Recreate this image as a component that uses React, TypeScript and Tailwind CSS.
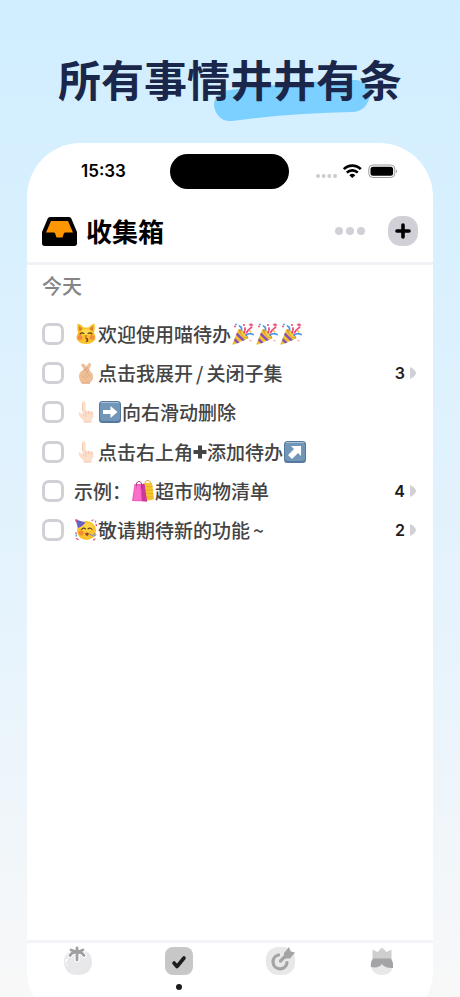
import React, { useState } from "react";

type SvgProps = React.SVGProps<SVGSVGElement>;

const emojiClass = "mx-px inline-block size-[22px] shrink-0";

const KissingCat = () => (
  <svg viewBox="0 0 44 44" className={emojiClass} role="img" aria-label="😽">
    <path d="M5 1c5 0 10 5 12 8h10c3-3 8-8 12-8 1 6 1 12-1 18l3 8c1 9-8 15-19 15S2 36 3 27l3-8C4 13 4 7 5 1z" fill="#fbc22e" />
    <path d="M8 6c3 1 5 3 7 6l-6 5c-1-4-2-7-1-11zM36 6c-3 1-5 3-7 6l6 5c1-4 2-7 1-11z" fill="#d98324" />
    <ellipse cx="22" cy="18" rx="9" ry="6" fill="#fee25a" opacity=".8" />
    <circle cx="10" cy="29" r="5" fill="#ef7a4a" opacity=".75" />
    <circle cx="34" cy="29" r="5" fill="#ef7a4a" opacity=".75" />
    <path d="M10 22q4-4 8-1M26 21q4-3 8 1M21 30q5 0 3 3 4 1-1 4" fill="none" stroke="#67351a" strokeWidth="2.2" strokeLinecap="round" />
    <path d="M19 25h6l-3 3z" fill="#b74d3b" />
  </svg>
);

const FingerHeart = () => (
  <svg viewBox="0 0 44 44" className={emojiClass} role="img" aria-label="🫰🏼">
    <path d="M14 43c-4-4-6-9-6-15 0-4 2-8 5-10l5-3-5-7c-2-4 2-7 5-4l5 5 3-5c2-4 7-2 6 2l-4 11c5 2 7 6 8 10 1 7-2 11-5 13l-1 3z" fill="#efbf98" />
    <path d="M18 15l3 2 3-6M24 19l4-2" fill="none" stroke="#c98e69" strokeWidth="1.500" strokeLinecap="round" />
    <path d="M23 21l7 7M19 24l7 7M15 28l6 6" fill="none" stroke="#d9a17b" strokeWidth="1.500" strokeLinecap="round" />
    <path d="M14 42h16" stroke="#dba17b" strokeWidth="2" />
  </svg>
);

const PointUp = () => (
  <svg viewBox="0 0 44 44" className={emojiClass} role="img" aria-label="👆🏻">
    <path d="M14 4c0-5 7-5 7 0v16l13 1c2 1 3 3 3 5 0 6-1 9-4 12v5H18l-2-5c-3-3-7-7-9-12-1-3 3-5 5-2l3 4z" fill="#fcdfca" />
    <path d="M22 20v6M27 20v6M32 21v5" fill="none" stroke="#e9c0a5" strokeWidth="1.300" strokeLinecap="round" />
    <path d="M15 28c4-2 7 1 7 4" fill="none" stroke="#e9c0a5" strokeWidth="1.300" />
    <path d="M18 42h15M15 5v15" fill="none" stroke="#edc4a9" strokeWidth="1.500" />
  </svg>
);

const ArrowTile = ({ diagonal }: { diagonal?: boolean }) => (
  <svg viewBox="0 0 44 44" className={emojiClass} role="img" aria-label={diagonal ? "↗️" : "➡️"}>
    <rect x="0" y="0" width="44" height="44" rx="7" fill="#55799c" />
    <rect x="2" y="2" width="40" height="38" rx="6" fill="#7196b7" />
    <path d="M5 3h34" stroke="#a8c3d9" strokeWidth="2" strokeLinecap="round" />
    {diagonal ? (
      <path d="M14 10h20v20l-6-6-12 12-8-8 12-12z" fill="#fff" />
    ) : (
      <path d="M8 18h15v-8l14 12-14 12v-8H8z" fill="#fff" />
    )}
  </svg>
);

const Party = () => (
  <svg viewBox="0 0 44 44" className={emojiClass} role="img" aria-label="🎉">
    <path d="M13 12 1 41c-1 2 1 3 3 2l28-12z" fill="#f5bd31" />
    <path d="M10 19l16 15-5 2L8 24zM6 30l9 9-5 2-6-6z" fill="#8054b9" />
    <path d="M14 12c6 1 18 12 19 19-6 2-22-13-19-19z" fill="#d39a29" />
    <path d="M17 15c6 3 10 8 13 14-6-1-12-7-13-14z" fill="#f9d45b" />
    <path d="M19 14c1-4 0-6-4-8M28 24c4-3 9-4 14-1" fill="none" stroke="#4a97ec" strokeWidth="3.500" strokeLinecap="round" />
    <path d="M24 19c2-3 3-5 2-9M29 19c2-1 2-4 4-5s3-5 6-5" fill="none" stroke="#ed4b77" strokeWidth="3.500" strokeLinecap="round" />
    <circle cx="6" cy="7" r="2" fill="#f0577c" />
    <circle cx="24" cy="4" r="2" fill="#e24e78" />
    <circle cx="37" cy="17" r="2" fill="#f1b72e" />
    <circle cx="8" cy="3" r="2" fill="#58a4ec" />
    <path d="M34 3l5-2 3 4-4 2zM35 35l4 1" fill="#f05f86" stroke="#f05f86" strokeWidth="1.500" />
  </svg>
);

const Bags = () => (
  <svg viewBox="0 0 44 44" className={emojiClass} role="img" aria-label="🛍️">
    <path d="M26 7c0-8 11-8 12 1v9" fill="none" stroke="#d6a128" strokeWidth="2" />
    <path d="M22 6h18l4 33-17 3z" fill="#f4c52e" />
    <path d="M25 13h17M26 20h17M26 27h17M27 34h16" stroke="#dfaa25" strokeWidth="1.500" />
    <path d="M5 8h20l5 35-30-1z" fill="#f45cbf" />
    <path d="M18 8h7l5 35-10-1z" fill="#c9389a" />
    <path d="M9 17V8c1-7 9-7 10 0v9" fill="none" stroke="#a7337d" strokeWidth="2" />
    <path d="M6 11h10l2 29H3z" fill="#ff7ad1" opacity=".6" />
  </svg>
);

const PartyFace = () => (
  <svg viewBox="0 0 44 44" className={emojiClass} role="img" aria-label="🥳">
    <circle cx="23" cy="23" r="19" fill="#fbc02d" />
    <ellipse cx="23" cy="16" rx="13" ry="9" fill="#fddc52" opacity=".7" />
    <path d="M1 1l20 6c-3 4-9 9-15 11z" fill="#7355bd" />
    <path d="M7 4l-2 9M14 6l-7 9" stroke="#4a7edc" strokeWidth="2" />
    <circle cx="3" cy="3" r="2.500" fill="#e54a76" />
    <circle cx="12" cy="28" r="5" fill="#ee7b35" opacity=".7" />
    <path d="M13 21q4-5 8-1M26 20q4-4 8 1" fill="none" stroke="#65401b" strokeWidth="2.200" strokeLinecap="round" />
    <path d="M21 28c4-1 6 0 7 2l-3 4c-4-1-5-3-4-6z" fill="#a34225" />
    <path d="M28 30l9 4c5 1 6-4 3-5-3 0-4 3-1 4" fill="none" stroke="#7f8fae" strokeWidth="2" strokeLinecap="round" />
    <path d="M34 3l2-1M42 11l1 2M2 27l0 3M3 39l3 2M37 42l3-2" stroke="#e74976" strokeWidth="2.500" strokeLinecap="round" />
    <path d="M41 4l0 2M2 34l1-1" stroke="#42a4dd" strokeWidth="2.500" strokeLinecap="round" />
  </svg>
);

const HeavyPlus = () => (
  <svg viewBox="0 0 28 44" className="inline-block h-[22px] w-[14px] shrink-0" role="img" aria-label="➕">
    <path d="M10 9h8v9h9v8h-9v9h-8v-9H1v-8h9z" fill="#444" />
  </svg>
);

const Tomato = (props: SvgProps) => (
  <svg viewBox="0 0 30 30" {...props}>
    <path d="M15 5c9-2 14 3 14 11 0 9-6 13-14 13S1 25 1 16C1 8 7 3 15 5z" fill="#e8e8ea" />
    <path d="M3 16q0-2 1-3M4 19l0 0" fill="none" stroke="#fff" strokeWidth="1.600" strokeLinecap="round" />
    <g fill="none" strokeLinecap="round" strokeLinejoin="round">
      <path d="M14 2v12M14 6l-6-2M14 6l6-2M14 6.500q-5-1-7 3M14 6.500q5-1 7 3" stroke="#fff" strokeWidth="5" />
      <path d="M14 2v12M14 6l-6-2M14 6l6-2M14 6.500q-5-1-7 3M14 6.500q5-1 7 3" stroke="#a0a0a4" strokeWidth="2.800" />
    </g>
  </svg>
);

const TaskCheck = (props: SvgProps) => (
  <svg viewBox="0 0 30 30" {...props}>
    <rect x="1" y="1" width="28" height="28" rx="8" fill="#c7c7c7" />
    <path d="M10 17l3 3.500 7-8.500" fill="none" stroke="#1d1d1f" strokeWidth="3.600" strokeLinecap="round" strokeLinejoin="round" />
  </svg>
);

const Target = (props: SvgProps) => (
  <svg viewBox="0 0 30 30" {...props}>
    <rect x="0" y="1" width="29" height="28" rx="12" fill="#e8e8e8" />
    <path d="M12.500 9a7 7 0 1 0 8.500 7.500" fill="none" stroke="#a4a4a7" strokeWidth="3.200" strokeLinecap="round" />
    <path d="M14.500 15l6-6" stroke="#a4a4a7" strokeWidth="3.200" strokeLinecap="round" />
    <path d="M18 7l5-6 1.500 4.500 4.500 1-5 6h-6z" fill="#a4a4a7" />
  </svg>
);

const King = (props: SvgProps) => (
  <svg viewBox="0 0 30 30" {...props}>
    <path d="M4 18c0 7 4 11 11 11s11-4 11-11z" fill="#e8e8e9" />
    <path d="M5.500 3.500l5 2.500L15 1.500 19.500 6l5-2.500V13h-19z" fill="#cfcfcf" strokeLinejoin="round" />
    <path d="M6 12.500h18c2 3 2.500 6 2 9.500-5 0-9-1-11-4-2 3-6 4-11 3-.500-3 0-6 2-8.500z" fill="#a4a4a7" />
  </svg>
);

const InboxIcon = () => (
  <svg viewBox="0 0 35 29" className="h-[29px] w-[35px]" aria-hidden="true">
    <path d="M8 0h19c1.500 0 2 1 2.500 2L35 15v11.500c0 1.500-1 2.500-2.500 2.500h-30C1 29 0 28 0 26.500V15L5.500 2C6 1 6.500 0 8 0z" fill="#000" />
    <path d="M9 4h17l5 11.500h-7.500c-1 0-1.500.500-2 2l-1 3h-6l-1-3c-.500-1.500-1-2-2-2H4z" fill="#ff9500" />
  </svg>
);

const StatusIcons = () => (
  <svg viewBox="0 0 84 16" className="h-4 w-[84px]" aria-hidden="true">
    <g fill="#cccccf">
      <circle cx="5" cy="12" r="2" />
      <circle cx="10.700" cy="12" r="2" />
      <circle cx="16.300" cy="12" r="2" />
      <circle cx="22" cy="12" r="2" />
    </g>
    <g fill="none" stroke="#000" strokeWidth="2.600">
      <path d="M30.800 5.200a12 12 0 0 1 17 0" />
      <path d="M33.800 8.600a7.800 7.800 0 0 1 11 0" />
    </g>
    <path d="M36.300 11.200a4.300 4.300 0 0 1 6 0l-3 2.800z" />
    <rect x="55.800" y="1" width="26" height="12.500" rx="4" fill="none" stroke="#9a9a9a" />
    <rect x="57.500" y="2.700" width="22.600" height="9" rx="2.500" />
    <path d="M83 5.200q2 2 0 4z" fill="#9a9a9a" />
  </svg>
);

const todos: { id: string; content: React.ReactNode; count?: number }[] = [
  { id: "welcome", content: <><KissingCat />欢迎使用喵待办<Party /><Party /><Party /></> },
  { id: "expand", content: <><FingerHeart />点击我展开<span className="px-[3px]">/</span>关闭子集</>, count: 3 },
  { id: "swipe", content: <><PointUp /><ArrowTile />向右滑动删除</> },
  { id: "add", content: <><PointUp />点击右上角<HeavyPlus />添加待办<ArrowTile diagonal /></> },
  { id: "shopping", content: <>示例：<Bags />超市购物清单</>, count: 4 },
  { id: "soon", content: <><PartyFace />敬请期待新的功能<span className="px-[3px]">~</span></>, count: 2 },
];

const tabs = [
  { name: "番茄", Icon: Tomato },
  { name: "待办", Icon: TaskCheck },
  { name: "目标", Icon: Target },
  { name: "我的", Icon: King },
];

const StatusBar = () => (
  <div className="grid h-[57px] grid-cols-3 items-center">
    <span className="pl-[54px] font-['Inter'] text-[17px] font-semibold">15:33</span>
    <div className="h-[35px] w-[119px] justify-self-center rounded-full bg-black" />
    <div className="justify-self-end pr-9">
      <StatusIcons />
    </div>
  </div>
);

const Header = () => (
  <header className="flex h-[65px] items-center border-b-3 border-[#f1f1f6] px-[15px]">
    <InboxIcon />
    <h2 className="ml-[9px] text-[26px] leading-8 font-bold">收集箱</h2>
    <button type="button" aria-label="更多" className="mr-[23px] ml-auto flex h-8 items-center gap-[3px]">
      <span className="size-2 rounded-full bg-[#d1d0d7]" />
      <span className="size-2 rounded-full bg-[#d1d0d7]" />
      <span className="size-2 rounded-full bg-[#d1d0d7]" />
    </button>
    <button type="button" aria-label="添加" className="flex size-[30px] items-center justify-center rounded-[13px] bg-[#d1d0d7]">
      <svg viewBox="0 0 16 16" className="size-4">
        <path d="M8 2v12M2 8h12" stroke="#000" strokeWidth="3.600" strokeLinecap="round" />
      </svg>
    </button>
  </header>
);

const TodoList = () => (
  <ul className="grid h-[236px] auto-rows-fr">
    {todos.map((todo) => (
      <li key={todo.id} className="flex items-center">
        <input
          id={todo.id}
          type="checkbox"
          className="size-[22px] shrink-0 appearance-none rounded-[7px] border-3 border-[#d1d0d7] checked:bg-[#d1d0d7]"
        />
        <label htmlFor={todo.id} className="ml-[10px] flex items-center text-[19px] leading-6 font-medium whitespace-nowrap text-[#444]">
          {todo.content}
        </label>
        {todo.count && (
          <button type="button" className="ml-auto flex items-center gap-1 font-['Inter'] text-[16px] leading-6 font-semibold text-[#1c1c1e]">
            {todo.count}
            <svg viewBox="0 0 8 12" className="h-3 w-2" aria-hidden="true">
              <path d="M1 1q0-1 1-.500C5 2 7 4.500 7 6s-2 4-5 5.500q-1 .500-1-.500z" fill="#d1d0d7" />
            </svg>
          </button>
        )}
      </li>
    ))}
  </ul>
);

const TabBar = () => {
  const [active, setActive] = useState("待办");

  return (
    <nav className="grid h-[85px] shrink-0 grid-cols-4 border-t-3 border-[#f3f3f8]">
      {tabs.map(({ name, Icon }) => (
        <button key={name} type="button" aria-label={name} onClick={() => setActive(name)} className="flex flex-col items-center gap-2 pt-[3px]">
          <Icon className="size-[30px]" />
          {active === name && <span className="size-[6px] rounded-full bg-[#1c1c1e]" />}
        </button>
      ))}
    </nav>
  );
};

export default function App() {
  return (
    <div className="flex h-screen flex-col overflow-hidden bg-linear-to-b from-[#d0eeff] via-[#e5f3fd] via-60% to-[#f8f8f8] px-[27px] font-['Noto_Sans_CJK_SC',sans-serif] text-black">
      <div className="flex h-[143px] shrink-0 justify-center pt-[46px]">
        <h1 className="relative h-[64px] text-[43px] leading-[64px] font-bold whitespace-nowrap text-[#1b264b]">
          <svg viewBox="0 0 156 42" className="absolute right-8 -bottom-3 h-[42px] w-[156px]" aria-hidden="true">
            <path d="M16 10Q75 2 137 0C149-1 157 5 156 14 155 25 148 32 138 32Q78 33 18 41C8 42 1 35 0 25 0 17 6 11 16 10z" fill="#7bd0ff" />
          </svg>
          <span className="relative">所有事情井井有条</span>
        </h1>
      </div>
      <main className="-mb-7 flex flex-1 flex-col overflow-hidden rounded-[54px] bg-white">
        <StatusBar />
        <Header />
        <section className="flex-1 pr-4 pl-[15px]">
          <h3 className="mt-[5px] mb-3 text-[20px] leading-8 font-medium text-[#858588]">今天</h3>
          <TodoList />
        </section>
        <TabBar />
      </main>
    </div>
  );
}
